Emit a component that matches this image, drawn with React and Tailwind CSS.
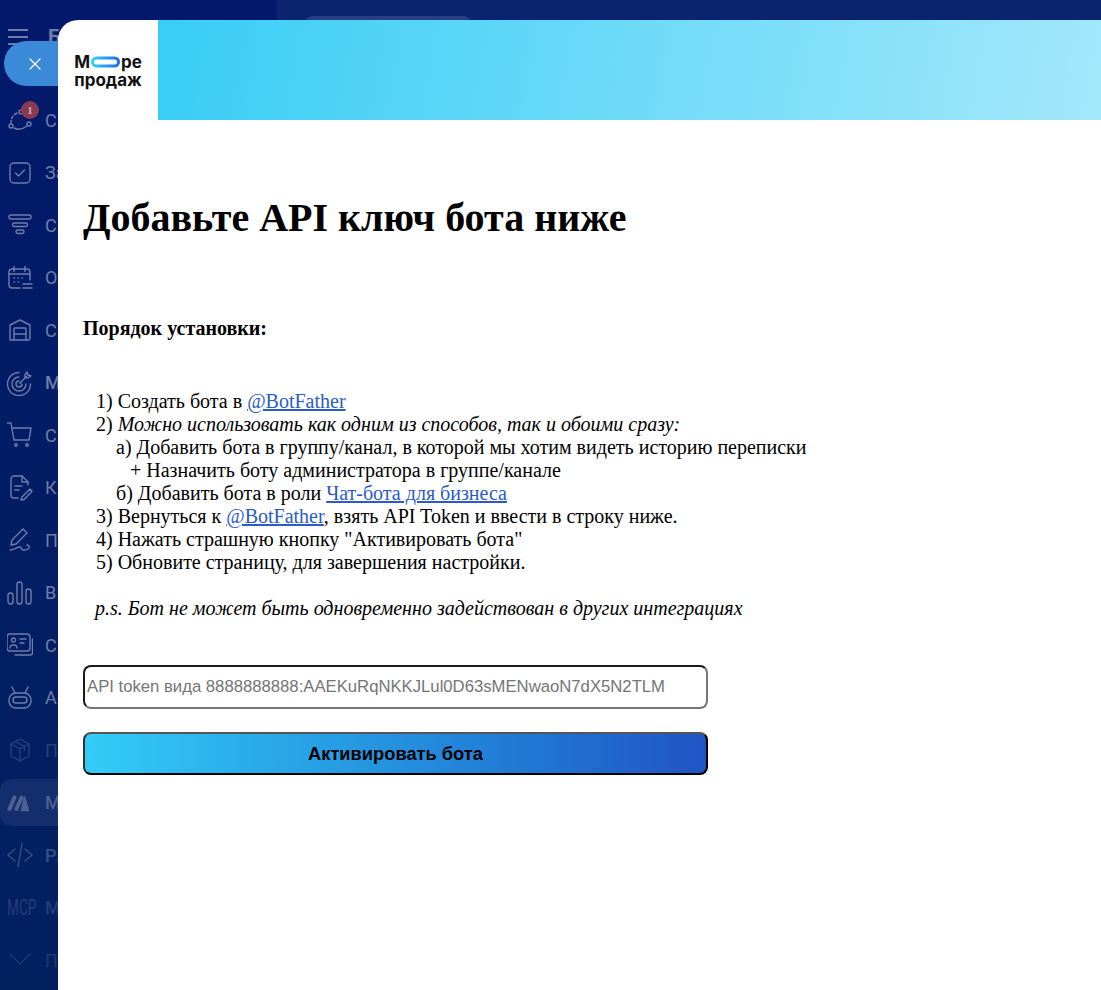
import { X } from "lucide-react";

function Ico({ children }) {
  return (
    <svg width="26" height="26" viewBox="0 0 26 26" fill="none" stroke="currentColor" strokeWidth="1.4" strokeLinecap="round" strokeLinejoin="round">
      {children}
    </svg>
  );
}

// only the part of each label that shows left of the modal
const items = [
  { label: "С", badge: true, icon: <Ico><circle cx="14" cy="5" r="2" /><circle cx="4" cy="19" r="2" /><circle cx="22" cy="17" r="2" /><path d="M10 6 C6 8 4 11 4 16" strokeDasharray="3 2" /><path d="M7 21 C11 23 16 22 20 19" /></Ico> },
  { label: "За", icon: <Ico><rect x="3" y="3" width="20" height="20" rx="4" /><path d="M8.5 13l3 3 6-6" /></Ico> },
  { label: "С", icon: <Ico><rect x="2" y="3" width="22" height="4" rx="2" /><rect x="5.5" y="11" width="15" height="3.5" rx="1.75" /><rect x="9" y="18" width="8" height="3.5" rx="1.75" /></Ico> },
  { label: "О", icon: <Ico><path d="M13 23H5a3 3 0 0 1-3-3V7a3 3 0 0 1 3-3h15a3 3 0 0 1 3 3v8" /><path d="M7 1.5v5M18 1.5v5M2 9h21" /><path d="M7 13h.5M11 13h.5M15 13h.5M7 17h.5M11 17h.5" /><path d="M16 19h9M16 23h9" /></Ico> },
  { label: "С", icon: <Ico><path d="M3 23V8l10-5 10 5v13a2 2 0 0 1-2 2H3z" /><path d="M7 23V12a1 1 0 0 1 1-1h10a1 1 0 0 1 1 1v11M7 17h12" /></Ico> },
  { label: "М", strong: true, icon: <Ico><path d="M19 14a7 7 0 1 1-7-7" /><path d="M23.5 14A11.5 11.5 0 1 1 12 2.5" /><path d="M15 14a3 3 0 1 1-3-3" /><path d="M12.5 13.5l7-7M18 5l2-3 1 3 3 1-3 2-3-.5z" /></Ico> },
  { label: "С", icon: <Ico><path d="M0 1h4l3 17h15l2-12H5" /><circle cx="9" cy="23" r="1.2" /><circle cx="20" cy="23" r="1.2" /></Ico> },
  { label: "К", icon: <Ico><path d="M11 23H7a3 3 0 0 1-3-3V4a3 3 0 0 1 3-3h8l6 6v3" /><path d="M15 1v6h6M8 11h7M8 15h4" /><path d="M15 22l-1 3 3-.5 8-8-2-2.5z" /></Ico> },
  { label: "П", icon: <Ico><path d="M4 18l1-5L16 2l4 4L9 17z" /><path d="M3 23c4 0 7-3 10-3 2 0 1 3 3 3s5 0 6-2c1-2-1-3-2-3" /></Ico> },
  { label: "В", icon: <Ico><rect x="1" y="13" width="5" height="11" rx="2.5" /><rect x="10" y="2" width="5" height="22" rx="2.5" /><rect x="19" y="9" width="5" height="15" rx="2.5" /></Ico> },
  { label: "С", icon: <Ico><rect x="0" y="2" width="23" height="17" rx="3" /><circle cx="6.5" cy="8" r="2" /><path d="M3 16c0-4 7-4 7 0M13 7h6M13 11h4" /><path d="M25.5 7v14a2 2 0 0 1-2 2H8" /></Ico> },
  { label: "А", icon: <Ico><rect x="2" y="8" width="22" height="15" rx="7" /><rect x="6" y="12" width="14" height="6" rx="3" /><path d="M5 2l3 6M21 2l-3 6" /></Ico> },
];

const lowItems = [
  { label: "П", dim: "opacity-35", icon: <Ico><path d="M13 2l9 5v12l-9 5-9-5V7z" /><path d="M4 7l9 5 9-5M13 12v12M8.5 4.5l9 5v4" /></Ico> },
  {
    label: "М",
    strong: true,
    active: true,
    dim: "opacity-70",
    icon: (
      <svg width="26" height="26" viewBox="0 0 26 26" fill="currentColor" stroke="currentColor" strokeLinecap="round" strokeLinejoin="round">
        <path d="M2.5 19L7.5 7.5" strokeWidth="4" />
        <path d="M9.5 19L14.5 7.5" strokeWidth="4" />
        <path d="M17.5 7l4 13.5h-7z" strokeWidth="1.5" />
      </svg>
    ),
  },
  { label: "Ра", strong: true, dim: "opacity-50", icon: <Ico><path d="M8 7L1 13l7 6M18 7l7 6-7 6M15 1l-4 24" /></Ico> },
  { label: "М", strong: true, dim: "opacity-30", icon: <span className="w-[26px] text-[22px] leading-none font-['Roboto',sans-serif] scale-x-[.62] origin-left whitespace-nowrap">MCP</span> },
  { label: "П", dim: "opacity-25", icon: <Ico><path d="M3 7l10 10 10-10" /></Ico> },
];

function Row({ item }) {
  return (
    <div className={`flex items-center h-[52.5px] shrink-0 whitespace-nowrap text-[#6f7da8] ${item.dim || ""}`}>
      <div className={`flex items-center w-full h-[47px] pl-[7px] gap-[12px] ${item.active ? "bg-white/[.1] rounded-xl" : ""}`}>
        <div className="relative w-[26px] h-[26px] flex items-center shrink-0">
          {item.icon}
          {item.badge && (
            <span className="absolute -top-[6px] left-[14px] w-[18px] h-[18px] rounded-full bg-[#8a3a52] text-[#c9b6c0] text-[11px] font-bold flex items-center justify-center">1</span>
          )}
        </div>
        <span className={`text-[18px] ${item.strong ? "font-medium" : ""} font-['Roboto',sans-serif]`}>{item.label}</span>
      </div>
    </div>
  );
}

export default function App() {
  return (
    <div className="relative w-[1101px] h-[990px] overflow-hidden bg-[#03186b] font-['Liberation_Serif',serif]">
      {/* Page behind the overlay */}
      <div className="flex h-full">
        <aside className="w-[277px] shrink-0 flex flex-col pt-[19px] bg-gradient-to-b from-[#03186b] to-[#03215f]">
          <div className="flex items-center h-[36px] pl-[8px] gap-[20px] text-[#6f7da8]">
            <div className="flex flex-col gap-[5px] w-[20px]">
              <span className="h-[2px] bg-current" />
              <span className="h-[2px] bg-current" />
              <span className="h-[2px] bg-current" />
            </div>
            <span className="text-[20px] font-bold font-['Roboto',sans-serif]">Б</span>
          </div>
          <div className="flex flex-col mt-[39px]">
            {items.map((item, i) => <Row key={i} item={item} />)}
            {lowItems.map((item, i) => <Row key={i} item={item} />)}
          </div>
        </aside>
        <div className="flex-1 bg-[#0c2370] pl-[28px] pt-[16px]">
          <div className="w-[166px] h-[40px] bg-[#2b3f85] rounded-lg" />
        </div>
      </div>

      {/* Close button */}
      <div className="absolute left-[4px] top-[41px] w-[120px] h-[45px] rounded-full bg-[#3a8ad8] flex items-center pl-[21px] text-white">
        <X size={20} strokeWidth={1.5} />
      </div>

      {/* Modal */}
      <div className="absolute left-[58px] top-[20px] right-0 bottom-0 bg-white rounded-tl-[20px] overflow-hidden flex flex-col text-black">
        <header className="flex h-[100px] shrink-0">
          <div className="w-[100px] flex flex-col items-center justify-center font-['Inter',sans-serif] font-bold text-[#111] text-[17px] leading-[18px] pt-[1px]">
            <div className="flex items-center">
              <span>М</span>
              <svg width="29" height="12" viewBox="0 0 29 12" className="mx-[1px]">
                <defs>
                  <linearGradient id="pill" x1="0" x2="1">
                    <stop offset="0" stopColor="#38cdf6" />
                    <stop offset="1" stopColor="#1f6fe0" />
                  </linearGradient>
                </defs>
                <rect x="1.5" y="2" width="26" height="8" rx="4" fill="none" stroke="url(#pill)" strokeWidth="3" />
              </svg>
              <span>ре</span>
            </div>
            <span>продаж</span>
          </div>
          <div className="flex-1 bg-[linear-gradient(100deg,#38cdf6,#a3e8fb)]" />
        </header>

        <main className="pl-[25px] flex-1 flex flex-col">
          <h1 className="text-[40px] leading-[43px] font-bold mt-[76px]">Добавьте API ключ бота ниже</h1>
          <p className="text-[20px] leading-[23px] font-bold mt-[78px]">Порядок установки:</p>
          <div className="text-[20px] leading-[23px] mt-[50px] pl-[13px]">
            <div>1) Создать бота в <a className="text-[#2a5bc9] underline">@BotFather</a></div>
            <div>2) <i>Можно использовать как одним из способов, так и обоими сразу:</i></div>
            <div className="pl-[20px]">а) Добавить бота в группу/канал, в которой мы хотим видеть историю переписки</div>
            <div className="pl-[34px]">+ Назначить боту администратора в группе/канале</div>
            <div className="pl-[20px]">б) Добавить бота в роли <a className="text-[#2a5bc9] underline">Чат-бота для бизнеса</a></div>
            <div>3) Вернуться к <a className="text-[#2a5bc9] underline">@BotFather</a>, взять API Token и ввести в строку ниже.</div>
            <div>4) Нажать страшную кнопку "Активировать бота"</div>
            <div>5) Обновите страницу, для завершения настройки.</div>
            <div className="mt-[23px] -ml-[1px] italic">p.s. Бот не может быть одновременно задействован в других интеграциях</div>
          </div>
          <input
            placeholder="API token вида 8888888888:AAEKuRqNKKJLul0D63sMENwaoN7dX5N2TLM"
            className="mt-[45px] w-[625px] h-[44px] px-[2px] rounded-[8px] border-2 border-t-[#1a1a1a] border-l-[#1a1a1a] border-r-[#767676] border-b-[#767676] text-[16.7px] font-['Liberation_Sans',sans-serif] placeholder:text-[#757575] outline-none"
          />
          <button className="mt-[23px] w-[625px] h-[43px] rounded-[8px] border-2 border-t-[#555] border-l-[#333] border-r-black border-b-black bg-gradient-to-r from-[#34cdf7] to-[#2153c4] text-[18.3px] font-bold font-['Liberation_Sans',sans-serif] text-black">
            Активировать бота
          </button>
        </main>
      </div>
    </div>
  );
}
